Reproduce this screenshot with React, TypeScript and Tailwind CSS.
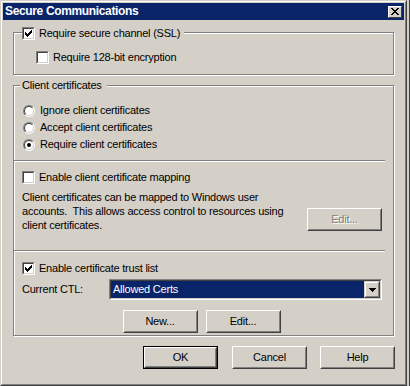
import React from 'react';

const Check = ({ checked }: { checked?: boolean }) => (
  <div className="w-[13px] h-[13px] shrink-0 border border-t-[#808080] border-l-[#808080] border-r-white border-b-white">
    <div className="w-full h-full border border-t-[#404040] border-l-[#404040] border-r-[#d4d0c8] border-b-[#d4d0c8] bg-white p-px">
      {checked && (
        <svg width="7" height="7" viewBox="0 0 7 7" shapeRendering="crispEdges" className="block">
          {[2, 3, 4, 3, 2, 1, 0].map((y, x) => (
            <rect key={x} x={x} y={y} width="1" height="3" fill="#000" />
          ))}
        </svg>
      )}
    </div>
  </div>
);

const Radio = ({ on }: { on?: boolean }) => (
  <div className="w-[12px] h-[12px] shrink-0 rounded-full border border-t-[#808080] border-l-[#808080] border-r-white border-b-white">
    <div className="w-full h-full rounded-full border border-t-[#404040] border-l-[#404040] border-r-[#d4d0c8] border-b-[#d4d0c8] bg-white flex items-center justify-center">
      {on && <div className="w-[4px] h-[4px] rounded-full bg-black" />}
    </div>
  </div>
);

const Btn = ({ label, disabled, primary }: { label: string; disabled?: boolean; primary?: boolean }) => {
  const face = (
    <div className="w-full h-full border border-t-white border-l-white border-r-[#404040] border-b-[#404040]">
      <div className="w-full h-full border border-t-[#d4d0c8] border-l-[#d4d0c8] border-r-[#808080] border-b-[#808080] flex items-center justify-center">
        <span className={disabled ? 'text-[#808080] [text-shadow:1px_1px_0_#fff]' : ''}>{label}</span>
      </div>
    </div>
  );
  if (primary) {
    return <div className="w-[75px] h-[23px] shrink-0 border border-black">{face}</div>;
  }
  return <div className="w-[75px] h-[23px] shrink-0">{face}</div>;
};

const Separator = () => <div className="h-[2px] mr-[8px] border-t border-t-[#808080] border-b border-b-white" />;

const App = () => {
  return (
    <div className="w-[410px] h-[386px] flex bg-[#d4d0c8] text-[11px] leading-[13px] tracking-[-0.22px] text-black font-['Liberation_Sans',Arial,sans-serif] overflow-hidden">
      <div className="w-[407px] h-[386px] shrink-0 border border-t-[#d4d0c8] border-l-[#d4d0c8] border-r-[#404040] border-b-[#404040]">
        <div className="w-full h-full border border-t-white border-l-white border-r-[#808080] border-b-[#808080] p-px">
          {/* title bar */}
          <div className="h-[17px] bg-[#0a246a] flex items-center justify-between pl-[2px] pr-[2px]">
            <span className="text-white font-bold text-[12px] tracking-[-0.35px]">Secure Communications</span>
            <div className="w-[14px] h-[12px] border border-t-white border-l-white border-r-[#404040] border-b-[#404040] bg-[#d4d0c8] flex items-center justify-center">
              <svg width="8" height="7" viewBox="0 0 8 7" shapeRendering="crispEdges" className="block">
                <rect x="0" y="0" width="2" height="1" /><rect x="6" y="0" width="2" height="1" />
                <rect x="1" y="1" width="2" height="1" /><rect x="5" y="1" width="2" height="1" />
                <rect x="2" y="2" width="4" height="1" />
                <rect x="3" y="3" width="2" height="1" />
                <rect x="2" y="4" width="4" height="1" />
                <rect x="1" y="5" width="2" height="1" /><rect x="5" y="5" width="2" height="1" />
                <rect x="0" y="6" width="2" height="1" /><rect x="6" y="6" width="2" height="1" />
              </svg>
            </div>
          </div>

          {/* SSL group */}
          <div className="relative w-[381px] h-[43px] ml-[10px] mt-[12px] border border-[#808080] shadow-[inset_1px_1px_0_#fff,1px_1px_0_#fff]">
            <div className="absolute left-[8px] top-[-6px] h-[13px] pr-[4px] bg-[#d4d0c8] flex items-center gap-[4px]">
              <Check checked />
              <span>Require secure channel (SSL)</span>
            </div>
            <div className="mt-[18px] ml-[22px] h-[13px] flex items-center gap-[4px]">
              <Check />
              <span>Require 128-bit encryption</span>
            </div>
          </div>

          {/* client certificates group */}
          <div className="relative w-[381px] h-[251px] ml-[10px] mt-[10px] border border-[#808080] shadow-[inset_1px_1px_0_#fff,1px_1px_0_#fff]">
            <div className="absolute left-[6px] top-[-8px] h-[14px] leading-[14px] pl-[2px] pr-[5px] bg-[#d4d0c8]">Client certificates</div>
            <div className="pt-[16px] pl-[9px]">
              <div className="h-[17px] flex items-center gap-[5px]"><Radio /><span>Ignore client certificates</span></div>
              <div className="h-[17px] flex items-center gap-[5px]"><Radio /><span>Accept client certificates</span></div>
              <div className="h-[17px] flex items-center gap-[5px]"><Radio on /><span>Require client certificates</span></div>
            </div>
            <div className="mt-[7px]"><Separator /></div>
            <div className="mt-[9px] pl-[8px] h-[13px] flex items-center gap-[4px]">
              <Check />
              <span>Enable client certificate mapping</span>
            </div>
            <div className="mt-[6px] pl-[8px] pr-[11px] flex items-start">
              <p className="flex-1 leading-[14px]">
                Client certificates can be mapped to Windows user<br />
                accounts.&nbsp; This allows access control to resources using<br />
                client certificates.
              </p>
              <div className="mt-[18px]"><Btn label="Edit..." disabled /></div>
            </div>
            <div className="mt-[18px]"><Separator /></div>
            <div className="mt-[10px] pl-[8px] h-[13px] flex items-center gap-[4px]">
              <Check checked />
              <span>Enable certificate trust list</span>
            </div>
            <div className="mt-[4px] pl-[8px] h-[21px] flex items-center">
              <span className="w-[87px]">Current CTL:</span>
              <div className="w-[273px] h-[21px] border border-t-[#808080] border-l-[#808080] border-r-white border-b-white">
                <div className="w-full h-full border border-t-[#404040] border-l-[#404040] border-r-[#d4d0c8] border-b-[#d4d0c8] bg-white flex">
                  <div className="flex-1 bg-[#0a246a] text-white pl-[2px] flex items-center">Allowed Certs</div>
                  <div className="w-[16px] h-full border border-t-[#d4d0c8] border-l-[#d4d0c8] border-r-[#404040] border-b-[#404040]">
                    <div className="w-full h-full border border-t-white border-l-white border-r-[#808080] border-b-[#808080] bg-[#d4d0c8] flex items-center justify-center">
                      <svg width="7" height="4" viewBox="0 0 7 4" shapeRendering="crispEdges" className="block">
                        <path d="M0 0H7V1H6V2H5V3H4V4H3V3H2V2H1V1H0Z" fill="#000" />
                      </svg>
                    </div>
                  </div>
                </div>
              </div>
            </div>
            <div className="mt-[10px] flex justify-center gap-[8px] pr-[4px]">
              <Btn label="New..." />
              <Btn label="Edit..." />
            </div>
          </div>

          {/* dialog buttons */}
          <div className="w-[382px] ml-[10px] mt-[10px] flex justify-end">
            <Btn label="OK" primary />
            <div className="ml-[14px]"><Btn label="Cancel" /></div>
            <div className="ml-[13px]"><Btn label="Help" /></div>
          </div>
        </div>
      </div>
      <div className="w-[3px] h-full border-r border-r-[#404040]" />
    </div>
  );
};

export default App;
